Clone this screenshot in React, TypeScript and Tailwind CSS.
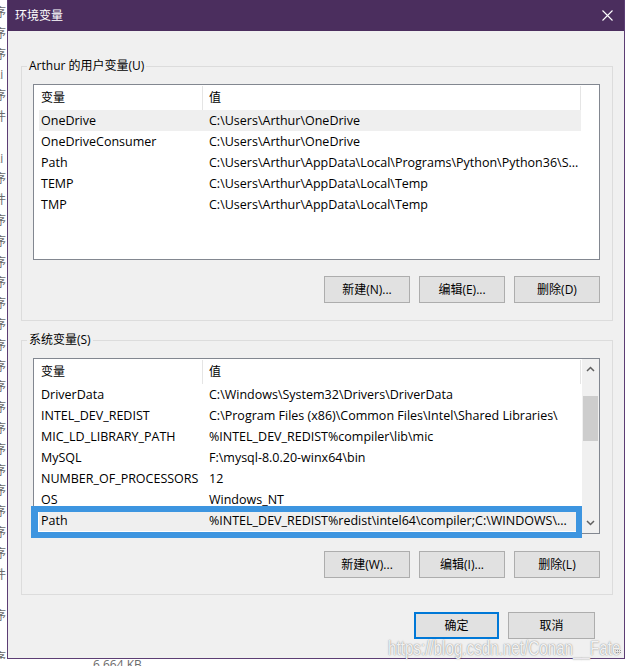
import React from "react";

const userVars: [string, string][] = [
  ["OneDrive", "C:\\Users\\Arthur\\OneDrive"],
  ["OneDriveConsumer", "C:\\Users\\Arthur\\OneDrive"],
  ["Path", "C:\\Users\\Arthur\\AppData\\Local\\Programs\\Python\\Python36\\S..."],
  ["TEMP", "C:\\Users\\Arthur\\AppData\\Local\\Temp"],
  ["TMP", "C:\\Users\\Arthur\\AppData\\Local\\Temp"],
];

const sysVars: [string, string][] = [
  ["DriverData", "C:\\Windows\\System32\\Drivers\\DriverData"],
  ["INTEL_DEV_REDIST", "C:\\Program Files (x86)\\Common Files\\Intel\\Shared Libraries\\"],
  ["MIC_LD_LIBRARY_PATH", "%INTEL_DEV_REDIST%compiler\\lib\\mic"],
  ["MySQL", "F:\\mysql-8.0.20-winx64\\bin"],
  ["NUMBER_OF_PROCESSORS", "12"],
  ["OS", "Windows_NT"],
  ["Path", "%INTEL_DEV_REDIST%redist\\intel64\\compiler;C:\\WINDOWS\\..."],
];

// bits of the explorer window behind the dialog
const behind = ["序", "序", "序", "Li", "序", "件", "", "Li", "序", "件", "序", "序", "序", "序", "序", "序", "序", "序", "序", "序", "序", "序", "序", "序", "序", "序", "序", "件", "", "序", "", "序"];

function Btn({ label, primary, w = "w-[86px]" }: { label: string; primary?: boolean; w?: string }) {
  return (
    <div
      className={`${w} h-[27px] flex items-center justify-center bg-[#e1e1e1] text-[12px] text-black ${
        primary ? "border-2 border-[#0078d7]" : "border border-[#adadad]"
      }`}
    >
      {label}
    </div>
  );
}

function Scrollbar() {
  return (
    <div className="w-[17px] h-full bg-[#f0f0f0] flex flex-col">
      <div className="h-[20px] flex items-center justify-center">
        <svg width="9" height="6" viewBox="0 0 9 6">
          <path d="M1 5 L4.5 1.5 L8 5" fill="none" stroke="#606060" strokeWidth="1.5" />
        </svg>
      </div>
      <div className="flex-1 px-[1px] pt-[17px]">
        <div className="h-[45px] bg-[#cdcdcd]" />
      </div>
      <div className="h-[20px] flex items-center justify-center">
        <svg width="9" height="6" viewBox="0 0 9 6">
          <path d="M1 1 L4.5 4.5 L8 1" fill="none" stroke="#606060" strokeWidth="1.5" />
        </svg>
      </div>
    </div>
  );
}

function VarList({ rows, hover, scroll, marked }: { rows: [string, string][]; hover?: number; scroll?: boolean; marked?: number }) {
  return (
    <div className="relative w-[567px] h-[176px] border border-[#828790] bg-white flex">
      <div className="flex-1 flex flex-col overflow-hidden">
        <div className="h-[25px] flex shrink-0 pt-[1px]">
          <div className="w-[169px] h-full border-r border-[#e5e5e5] pl-[7px] flex items-center">变量</div>
          <div className="w-[378px] h-full border-r border-[#e5e5e5] pl-[6px] flex items-center">值</div>
        </div>
        {rows.map(([k, v], i) => (
          <div
            key={k + i}
            className={`h-[21px] ml-[5px] w-[542px] flex items-center shrink-0 pt-[1px] text-[12.5px] ${
              i === hover || i === marked ? "bg-[#efefef]" : ""
            }`}
          >
            <div className="w-[164px] pl-[2px] whitespace-nowrap overflow-hidden">{k}</div>
            <div className="flex-1 pl-[6px] whitespace-nowrap overflow-hidden">{v}</div>
          </div>
        ))}
      </div>
      {scroll && <Scrollbar />}
      {marked !== undefined && (
        <div className="absolute left-[-3px] top-[147px] w-[551px] h-[32px] border-[6px] border-l-[7px] border-[#3d95e0]" />
      )}
    </div>
  );
}

function Group({ title, children, className }: { title: string; children: React.ReactNode; className: string }) {
  return (
    <div className={`relative ml-[13px] w-[592px] border border-[#dcdcdc] pl-[11px] pt-[17px] ${className}`}>
      <span className="absolute left-[5px] top-[-10px] px-[2px] bg-[#f0f0f0] leading-[18px]">{title}</span>
      {children}
    </div>
  );
}

export default function App() {
  return (
    <div className="relative w-[632px] h-[666px] bg-white overflow-hidden text-[12px] text-black font-['Open_Sans','Noto_Sans_CJK_SC',sans-serif]">
      <div className="flex h-[659px]">
        <div className="w-[7px] h-full overflow-hidden text-[#6b6b6b] leading-[20.8px] pt-[3px]">
          {behind.map((c, i) => (
            <div key={i} className="h-[20.8px] ml-[-6px] whitespace-nowrap">
              {c}
            </div>
          ))}
        </div>

        <div className="w-[618px] h-full border-x border-b border-[#5c3d74] flex flex-col bg-[#f0f0f0]">
          <div className="h-[31px] bg-[#4b2e5e] flex items-center justify-between pl-[7px] pr-[11px] shrink-0">
            <span className="text-white">环境变量</span>
            <svg width="11" height="11" viewBox="0 0 11 11">
              <path d="M0.5 0.5 L10.5 10.5 M10.5 0.5 L0.5 10.5" stroke="#ffffff" strokeWidth="1.1" />
            </svg>
          </div>

          <Group title="Arthur 的用户变量(U)" className="mt-[35px] pb-[17px]">
            <VarList rows={userVars} hover={0} />
            <div className="w-[567px] mt-[16px] flex justify-end gap-[9px]">
              <Btn label="新建(N)..." />
              <Btn label="编辑(E)..." />
              <Btn label="删除(D)" />
            </div>
          </Group>

          <Group title="系统变量(S)" className="mt-[19px] pb-[16px]">
            <VarList rows={sysVars} scroll marked={6} />
            <div className="w-[567px] mt-[17px] flex justify-end gap-[9px]">
              <Btn label="新建(W)..." />
              <Btn label="编辑(I)..." />
              <Btn label="删除(L)" />
            </div>
          </Group>

          <div className="mt-[17px] flex justify-end gap-[9px] pr-[29px]">
            <Btn label="确定" primary w="w-[85px]" />
            <Btn label="取消" w="w-[87px]" />
          </div>
        </div>
        <div className="w-[7px]" />
      </div>

      <div className="h-[7px] overflow-hidden pl-[93px] text-[#6b6b6b] leading-[12px]">6,664 KB</div>

      {/* blog watermark */}
      <div className="absolute left-[388px] top-[633px] origin-left scale-x-[0.76] text-[20px] font-['Liberation_Sans',sans-serif] text-white/90 whitespace-nowrap [text-shadow:0_0_1.5px_rgba(0,0,0,0.6)]">
        https://blog.csdn.net/Conan__Fate
      </div>
      <div className="absolute left-[616px] top-[650px] grid grid-cols-3 gap-[1px]">
        {[0, 1, 2, 3, 4, 5].map((i) => (
          <div key={i} className="w-[1px] h-[1px] bg-[#9a9a9a]" />
        ))}
      </div>
    </div>
  );
}
